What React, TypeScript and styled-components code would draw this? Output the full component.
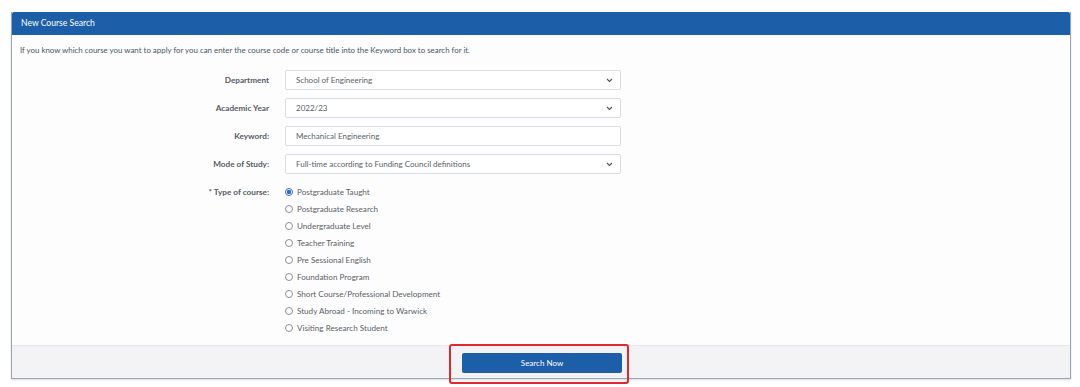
import React, { useState } from "react";
import styled, { createGlobalStyle } from "styled-components";

const GlobalStyle = createGlobalStyle`
  html, body {
    margin: 0;
    padding: 0;
    background: #ffffff;
    font-family: "Lato", "Open Sans", sans-serif;
  }
`;

const courseTypes = [
  "Postgraduate Taught",
  "Postgraduate Research",
  "Undergraduate Level",
  "Teacher Training",
  "Pre Sessional English",
  "Foundation Program",
  "Short Course/Professional Development",
  "Study Abroad - Incoming to Warwick",
  "Visiting Research Student",
];

const App = () => {
  const [courseType, setCourseType] = useState(courseTypes[0]);

  return (
    <>
      <GlobalStyle />
      <SPage>
        <SPanel>
          <SHeader>New Course Search</SHeader>
          <SBody>
            <SIntro>
              If you know which course you want to apply for you can enter the
              course code or course title into the Keyword box to search for it.
            </SIntro>
            <SForm>
              <SLabel>Department</SLabel>
              <SSelect>
                <span>School of Engineering</span>
                <Chevron />
              </SSelect>
              <SLabel>Academic Year</SLabel>
              <SSelect>
                <span>2022/23</span>
                <Chevron />
              </SSelect>
              <SLabel>Keyword:</SLabel>
              <SSelect>
                <span>Mechanical Engineering</span>
              </SSelect>
              <SLabel>Mode of Study:</SLabel>
              <SSelect>
                <span>Full-time according to Funding Council definitions</span>
                <Chevron />
              </SSelect>
              <SLabel $top>* Type of course:</SLabel>
              <SRadioList>
                {courseTypes.map((t) => (
                  <SRadioRow key={t} onClick={() => setCourseType(t)}>
                    <SRadio $checked={t === courseType} />
                    {t}
                  </SRadioRow>
                ))}
              </SRadioList>
            </SForm>
          </SBody>
          <SFooter>
            <SHighlight>
              <SButton>Search Now</SButton>
            </SHighlight>
          </SFooter>
        </SPanel>
      </SPage>
    </>
  );
};

const Chevron = () => (
  <svg width="7" height="5" viewBox="0 0 7 5">
    <path d="M1 1 L3.5 3.5 L6 1" fill="none" stroke="#555" strokeWidth="1.2" />
  </svg>
);

const SPage = styled.div`
  width: 1080px;
  height: 387px;
  padding: 12px 9px 0 11px;
  box-sizing: border-box;
`;

const SPanel = styled.div`
  border: 1px solid #9aa4b4;
  border-top: none;
  background: #fdfdfe;
  box-shadow: 0 1px 2px rgba(0, 0, 0, 0.15);
`;

const SHeader = styled.div`
  background: #1d5ea8;
  color: #ffffff;
  font-size: 8.6px;
  height: 23px;
  line-height: 23px;
  padding-left: 9px;
  border-radius: 2px 2px 0 0;
`;

const SBody = styled.div`
  padding: 10px 0 9px 8px;
`;

const SIntro = styled.p`
  margin: 0 0 15px;
  font-size: 7.9px;
  color: #4a5562;
`;

const SForm = styled.div`
  display: grid;
  grid-template-columns: 249px 336px;
  column-gap: 16px;
  row-gap: 8px;
  align-items: center;
`;

const SLabel = styled.div<{ $top?: boolean }>`
  text-align: right;
  font-size: 8.2px;
  font-weight: 700;
  color: #555b62;
  align-self: ${({ $top }) => ($top ? "start" : "center")};
  margin-top: ${({ $top }) => ($top ? "5px" : "0")};
`;

const SSelect = styled.div`
  height: 20px;
  box-sizing: border-box;
  border: 1px solid #d9dce0;
  border-radius: 2px;
  background: #fff;
  display: flex;
  align-items: center;
  justify-content: space-between;
  padding: 0 7px 0 10px;
  font-size: 8px;
  color: #5a5f66;
`;

const SRadioList = styled.div`
  display: flex;
  flex-direction: column;
  margin-top: 2px;
`;

const SRadioRow = styled.label`
  display: flex;
  align-items: center;
  gap: 4px;
  height: 16.9px;
  font-size: 8.1px;
  color: #5a5f66;
  cursor: pointer;
`;

const SRadio = styled.span<{ $checked: boolean }>`
  width: 6px;
  height: 6px;
  border-radius: 50%;
  border: 1px solid ${({ $checked }) => ($checked ? "#2d6fd0" : "#8b8f95")};
  background: ${({ $checked }) =>
    $checked ? "radial-gradient(circle, #2d6fd0 0 2px, #fff 2.4px)" : "#fff"};
`;

const SFooter = styled.div`
  background: #f3f3f5;
  border-top: 1px solid #e6e6ea;
  height: 32px;
  display: flex;
  justify-content: center;
  align-items: center;
`;

const SHighlight = styled.div`
  border: 2px solid #e0282e;
  border-radius: 3px;
  padding: 7px 5px 9px 11px;
  margin: 3px 4px 0 0;
`;

const SButton = styled.button`
  width: 160px;
  height: 20px;
  border: none;
  border-radius: 2px;
  background: #1d5ea8;
  color: #fff;
  font-family: "Lato", sans-serif;
  font-size: 8px;
  cursor: pointer;
  display: block;
`;

export default App;
